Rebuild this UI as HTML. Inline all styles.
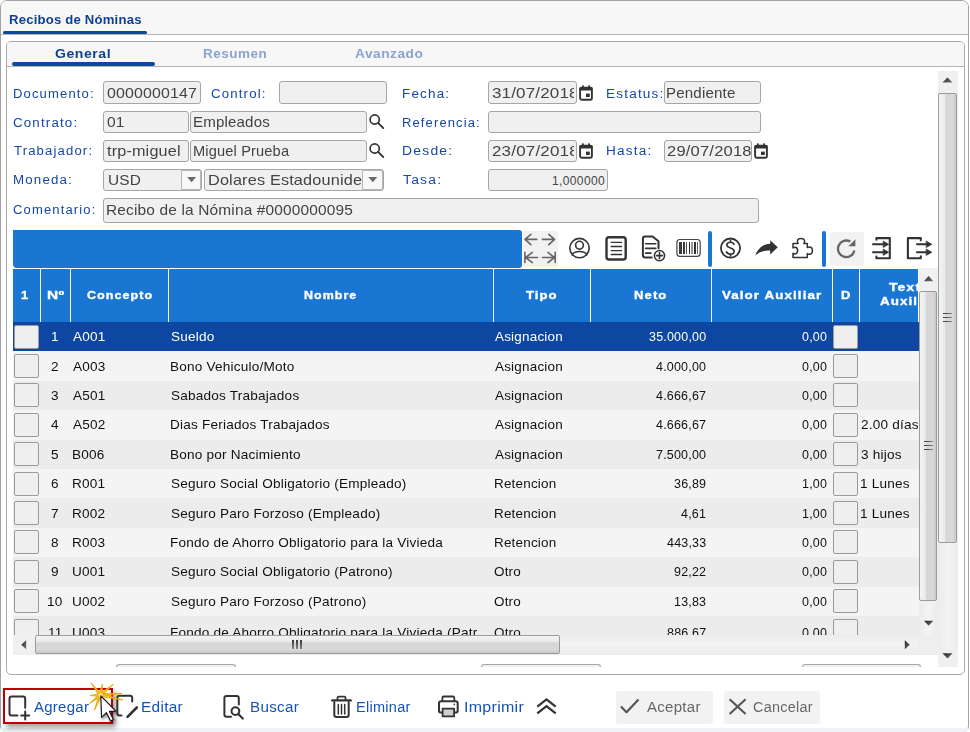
<!DOCTYPE html><html><head><meta charset="utf-8"><style>
html,body{margin:0;padding:0;background:#fff;width:970px;height:732px;overflow:hidden;position:relative;font-family:"Liberation Sans",sans-serif}
div{box-sizing:border-box}
svg{position:absolute;overflow:visible}
</style></head><body>
<div style="position:absolute;left:0px;top:0px;width:969px;height:733px;border:1px solid #a3a3a3;border-radius:7px;background:#fff"></div>
<div style="position:absolute;left:1px;top:1px;width:967px;height:33px;background:#f7f7f7;border-radius:6px 6px 0 0"></div>
<div style="position:absolute;left:1px;top:34px;width:967px;height:1px;background:#b4b4b4"></div>
<div style="position:absolute;left:9.09px;top:12.95px;font-size:13px;line-height:13px;height:13px;white-space:nowrap;color:#0f3f93;font-weight:bold;letter-spacing:0.200px;transform:scaleX(1.0092);transform-origin:0 0;">Recibos de Nóminas</div>
<div style="position:absolute;left:3px;top:31px;width:144px;height:3px;background:#0d47a1;border-radius:2px"></div>
<div style="position:absolute;left:1px;top:728px;width:967px;height:4px;background:#eef2f6;border-radius:0 0 6px 6px"></div>
<div style="position:absolute;left:6px;top:41px;width:959px;height:634px;border:1px solid #a9a9a9;border-radius:5px;background:#fff"></div>
<div style="position:absolute;left:7px;top:42px;width:957px;height:24px;background:#f7f7f7;border-radius:4px 4px 0 0"></div>
<div style="position:absolute;left:7px;top:66px;width:957px;height:1px;background:#b4b4b4"></div>
<div style="position:absolute;left:55.16px;top:46.95px;font-size:13px;line-height:13px;height:13px;white-space:nowrap;color:#0f3f93;font-weight:bold;letter-spacing:0.500px;transform:scaleX(1.0800);transform-origin:0 0;">General</div>
<div style="position:absolute;left:12px;top:62px;width:143px;height:4px;background:#0d47a1;border-radius:2px"></div>
<div style="position:absolute;left:203.37px;top:46.95px;font-size:13px;line-height:13px;height:13px;white-space:nowrap;color:#8ba3cf;font-weight:bold;letter-spacing:0.500px;transform:scaleX(1.0368);transform-origin:0 0;">Resumen</div>
<div style="position:absolute;left:354.68px;top:46.95px;font-size:13px;line-height:13px;height:13px;white-space:nowrap;color:#8ba3cf;font-weight:bold;letter-spacing:0.500px;transform:scaleX(1.0535);transform-origin:0 0;">Avanzado</div>
<div style="position:absolute;left:13.06px;top:87.67px;font-size:12.5px;line-height:12.5px;height:12.5px;white-space:nowrap;color:#1647a6;font-weight:normal;letter-spacing:1.100px;transform:scaleX(1.0426);transform-origin:0 0;">Documento:</div>
<div style="position:absolute;left:13.46px;top:116.58px;font-size:12.5px;line-height:12.5px;height:12.5px;white-space:nowrap;color:#1647a6;font-weight:normal;letter-spacing:1.100px;transform:scaleX(1.0650);transform-origin:0 0;">Contrato:</div>
<div style="position:absolute;left:13.79px;top:145.38px;font-size:12.5px;line-height:12.5px;height:12.5px;white-space:nowrap;color:#1647a6;font-weight:normal;letter-spacing:1.100px;transform:scaleX(1.0479);transform-origin:0 0;">Trabajador:</div>
<div style="position:absolute;left:13.04px;top:174.47px;font-size:12.5px;line-height:12.5px;height:12.5px;white-space:nowrap;color:#1647a6;font-weight:normal;letter-spacing:1.100px;transform:scaleX(1.0640);transform-origin:0 0;">Moneda:</div>
<div style="position:absolute;left:13.48px;top:204.38px;font-size:12.5px;line-height:12.5px;height:12.5px;white-space:nowrap;color:#1647a6;font-weight:normal;letter-spacing:1.100px;transform:scaleX(1.0401);transform-origin:0 0;">Comentario:</div>
<div style="position:absolute;left:210.66px;top:87.67px;font-size:12.5px;line-height:12.5px;height:12.5px;white-space:nowrap;color:#1647a6;font-weight:normal;letter-spacing:1.100px;transform:scaleX(1.0584);transform-origin:0 0;">Control:</div>
<div style="position:absolute;left:401.92px;top:87.67px;font-size:12.5px;line-height:12.5px;height:12.5px;white-space:nowrap;color:#1647a6;font-weight:normal;letter-spacing:1.100px;transform:scaleX(1.0769);transform-origin:0 0;">Fecha:</div>
<div style="position:absolute;left:401.96px;top:116.58px;font-size:12.5px;line-height:12.5px;height:12.5px;white-space:nowrap;color:#1647a6;font-weight:normal;letter-spacing:1.100px;transform:scaleX(1.0371);transform-origin:0 0;">Referencia:</div>
<div style="position:absolute;left:401.89px;top:145.38px;font-size:12.5px;line-height:12.5px;height:12.5px;white-space:nowrap;color:#1647a6;font-weight:normal;letter-spacing:1.100px;transform:scaleX(1.1116);transform-origin:0 0;">Desde:</div>
<div style="position:absolute;left:402.67px;top:174.47px;font-size:12.5px;line-height:12.5px;height:12.5px;white-space:nowrap;color:#1647a6;font-weight:normal;letter-spacing:1.100px;transform:scaleX(1.1098);transform-origin:0 0;">Tasa:</div>
<div style="position:absolute;left:605.92px;top:87.67px;font-size:12.5px;line-height:12.5px;height:12.5px;white-space:nowrap;color:#1647a6;font-weight:normal;letter-spacing:1.100px;transform:scaleX(1.0848);transform-origin:0 0;">Estatus:</div>
<div style="position:absolute;left:605.91px;top:145.38px;font-size:12.5px;line-height:12.5px;height:12.5px;white-space:nowrap;color:#1647a6;font-weight:normal;letter-spacing:1.100px;transform:scaleX(1.0886);transform-origin:0 0;">Hasta:</div>
<div style="position:absolute;left:103px;top:81px;width:98px;height:23px;background:#f0f0f0;border:1px solid #a6a6a6;border-radius:3px;overflow:hidden;"><div style="position:absolute;left:2.84px;top:4.08px;font-size:14.5px;line-height:14.5px;height:14.5px;white-space:nowrap;color:#444;font-weight:normal;letter-spacing:0.150px;transform:scaleX(1.0973);transform-origin:0 0;">0000000147</div></div>
<div style="position:absolute;left:279px;top:81px;width:108px;height:23px;background:#f0f0f0;border:1px solid #a6a6a6;border-radius:3px;overflow:hidden;"></div>
<div style="position:absolute;left:488px;top:81px;width:89px;height:23px;background:#f0f0f0;border:1px solid #a6a6a6;border-radius:3px;overflow:hidden;"><div style="position:absolute;left:0px;top:0px;width:84.5px;height:21px;overflow:hidden"><div style="position:absolute;left:2.80px;top:4.08px;font-size:14.5px;line-height:14.5px;height:14.5px;white-space:nowrap;color:#444;font-weight:normal;letter-spacing:0.150px;transform:scaleX(1.1700);transform-origin:0 0;">31/07/2018</div></div></div>
<div style="position:absolute;left:664px;top:81px;width:97px;height:23px;background:#f0f0f0;border:1px solid #a6a6a6;border-radius:3px;overflow:hidden;"><div style="position:absolute;left:0.85px;top:4.08px;font-size:14.5px;line-height:14.5px;height:14.5px;white-space:nowrap;color:#444;font-weight:normal;letter-spacing:0.150px;transform:scaleX(1.0417);transform-origin:0 0;">Pendiente</div></div>
<div style="position:absolute;left:103px;top:111px;width:86px;height:22px;background:#f0f0f0;border:1px solid #a6a6a6;border-radius:3px;overflow:hidden;"><div style="position:absolute;left:2.86px;top:2.88px;font-size:14.5px;line-height:14.5px;height:14.5px;white-space:nowrap;color:#444;font-weight:normal;letter-spacing:0.150px;transform:scaleX(1.0702);transform-origin:0 0;">01</div></div>
<div style="position:absolute;left:190px;top:111px;width:177px;height:22px;background:#f0f0f0;border:1px solid #a6a6a6;border-radius:3px;overflow:hidden;"><div style="position:absolute;left:2.45px;top:2.88px;font-size:14.5px;line-height:14.5px;height:14.5px;white-space:nowrap;color:#444;font-weight:normal;letter-spacing:0.150px;transform:scaleX(1.0403);transform-origin:0 0;">Empleados</div></div>
<div style="position:absolute;left:488px;top:111px;width:273px;height:22px;background:#f0f0f0;border:1px solid #a6a6a6;border-radius:3px;overflow:hidden;"></div>
<div style="position:absolute;left:103px;top:140px;width:86px;height:22px;background:#f0f0f0;border:1px solid #a6a6a6;border-radius:3px;overflow:hidden;"><div style="position:absolute;left:3.28px;top:2.68px;font-size:14.5px;line-height:14.5px;height:14.5px;white-space:nowrap;color:#444;font-weight:normal;letter-spacing:0.150px;transform:scaleX(1.1168);transform-origin:0 0;">trp-miguel</div></div>
<div style="position:absolute;left:190px;top:140px;width:177px;height:22px;background:#f0f0f0;border:1px solid #a6a6a6;border-radius:3px;overflow:hidden;"><div style="position:absolute;left:2.49px;top:2.68px;font-size:14.5px;line-height:14.5px;height:14.5px;white-space:nowrap;color:#444;font-weight:normal;letter-spacing:0.150px;transform:scaleX(1.0074);transform-origin:0 0;">Miguel Prueba</div></div>
<div style="position:absolute;left:488px;top:140px;width:89px;height:22px;background:#f0f0f0;border:1px solid #a6a6a6;border-radius:3px;overflow:hidden;"><div style="position:absolute;left:0px;top:0px;width:84.5px;height:20px;overflow:hidden"><div style="position:absolute;left:2.68px;top:2.68px;font-size:14.5px;line-height:14.5px;height:14.5px;white-space:nowrap;color:#444;font-weight:normal;letter-spacing:0.150px;transform:scaleX(1.1716);transform-origin:0 0;">23/07/2018</div></div></div>
<div style="position:absolute;left:664px;top:140px;width:88px;height:22px;background:#f0f0f0;border:1px solid #a6a6a6;border-radius:3px;overflow:hidden;"><div style="position:absolute;left:0px;top:0px;width:85.5px;height:20px;overflow:hidden"><div style="position:absolute;left:1.80px;top:2.68px;font-size:14.5px;line-height:14.5px;height:14.5px;white-space:nowrap;color:#444;font-weight:normal;letter-spacing:0.150px;transform:scaleX(1.1440);transform-origin:0 0;">29/07/2018</div></div></div>
<div style="position:absolute;left:103px;top:169px;width:99px;height:22px;background:#f0f0f0;border:1px solid #a6a6a6;border-radius:3px;overflow:hidden;"><div style="position:absolute;left:3.73px;top:2.88px;font-size:14.5px;line-height:14.5px;height:14.5px;white-space:nowrap;color:#444;font-weight:normal;letter-spacing:0.150px;transform:scaleX(1.0653);transform-origin:0 0;">USD</div></div>
<div style="position:absolute;left:204px;top:169px;width:180px;height:22px;background:#f0f0f0;border:1px solid #a6a6a6;border-radius:3px;overflow:hidden;"><div style="position:absolute;left:3.15px;top:2.88px;font-size:14.5px;line-height:14.5px;height:14.5px;white-space:nowrap;color:#444;font-weight:normal;letter-spacing:0.150px;transform:scaleX(1.1211);transform-origin:0 0;">Dolares Estadounidenses</div></div>
<div style="position:absolute;left:181px;top:170px;width:20px;height:20px;background:#f8f8f8;border:1px solid #b8b8b8;border-radius:0 2px 2px 0"></div>
<div style="position:absolute;left:362px;top:170px;width:21px;height:20px;background:#f8f8f8;border:1px solid #b8b8b8;border-radius:0 2px 2px 0"></div>
<div style="position:absolute;left:488px;top:169px;width:120px;height:22px;background:#f0f0f0;border:1px solid #a6a6a6;border-radius:3px;overflow:hidden;"><div style="position:absolute;left:62.90px;top:4.80px;font-size:12px;line-height:12px;height:12px;white-space:nowrap;color:#444;font-weight:normal;letter-spacing:0.400px;">1,000000</div></div>
<div style="position:absolute;left:103px;top:198px;width:656px;height:25px;background:#f0f0f0;border:1px solid #a6a6a6;border-radius:3px;overflow:hidden;"><div style="position:absolute;left:2.22px;top:3.68px;font-size:14.5px;line-height:14.5px;height:14.5px;white-space:nowrap;color:#444;font-weight:normal;letter-spacing:0.150px;transform:scaleX(1.0652);transform-origin:0 0;">Recibo de la Nómina #0000000095</div></div>
<svg style="left:0;top:0" width="970" height="732"><circle cx="374.7" cy="119.5" r="4.6" fill="none" stroke="#333" stroke-width="1.7"/><line x1="378.09999999999997" y1="122.9" x2="383.3" y2="128.1" stroke="#333" stroke-width="1.9" stroke-linecap="round"/></svg>
<svg style="left:0;top:0" width="970" height="732"><circle cx="374.7" cy="148.5" r="4.6" fill="none" stroke="#333" stroke-width="1.7"/><line x1="378.09999999999997" y1="151.9" x2="383.3" y2="157.1" stroke="#333" stroke-width="1.9" stroke-linecap="round"/></svg>
<svg style="left:579px;top:85px" width="14" height="16" viewBox="0 0 14 16"><rect x="1.1" y="2.6" width="11.8" height="12.2" rx="1.8" fill="none" stroke="#333" stroke-width="1.9"/><rect x="0.5" y="2" width="13" height="3.6" rx="1" fill="#333"/><rect x="3" y="0.2" width="1.8" height="3" rx="0.6" fill="#333"/><rect x="9.2" y="0.2" width="1.8" height="3" rx="0.6" fill="#333"/><rect x="7" y="8.6" width="3.8" height="3.4" fill="#333"/></svg>
<svg style="left:579px;top:143px" width="14" height="16" viewBox="0 0 14 16"><rect x="1.1" y="2.6" width="11.8" height="12.2" rx="1.8" fill="none" stroke="#333" stroke-width="1.9"/><rect x="0.5" y="2" width="13" height="3.6" rx="1" fill="#333"/><rect x="3" y="0.2" width="1.8" height="3" rx="0.6" fill="#333"/><rect x="9.2" y="0.2" width="1.8" height="3" rx="0.6" fill="#333"/><rect x="7" y="8.6" width="3.8" height="3.4" fill="#333"/></svg>
<svg style="left:754px;top:143px" width="14" height="16" viewBox="0 0 14 16"><rect x="1.1" y="2.6" width="11.8" height="12.2" rx="1.8" fill="none" stroke="#333" stroke-width="1.9"/><rect x="0.5" y="2" width="13" height="3.6" rx="1" fill="#333"/><rect x="3" y="0.2" width="1.8" height="3" rx="0.6" fill="#333"/><rect x="9.2" y="0.2" width="1.8" height="3" rx="0.6" fill="#333"/><rect x="7" y="8.6" width="3.8" height="3.4" fill="#333"/></svg>
<svg style="left:0;top:0" width="970" height="732"><path d="M187.1 177.1 L196.1 177.1 L191.6 182.29999999999998 Z" fill="#6a6a6a"/></svg>
<svg style="left:0;top:0" width="970" height="732"><path d="M368.3 177.1 L377.3 177.1 L372.8 182.29999999999998 Z" fill="#6a6a6a"/></svg>
<div style="position:absolute;left:13px;top:230px;width:509px;height:38px;background:#1976d2;border-radius:0 3px 3px 4px"></div>
<div style="position:absolute;left:13px;top:269px;width:905px;height:53px;background:#1976d2"></div>
<div style="position:absolute;left:40px;top:269px;width:1px;height:53px;background:#fff"></div>
<div style="position:absolute;left:70px;top:269px;width:1px;height:53px;background:#fff"></div>
<div style="position:absolute;left:168px;top:269px;width:1px;height:53px;background:#fff"></div>
<div style="position:absolute;left:493px;top:269px;width:1px;height:53px;background:#fff"></div>
<div style="position:absolute;left:590px;top:269px;width:1px;height:53px;background:#fff"></div>
<div style="position:absolute;left:711px;top:269px;width:1px;height:53px;background:#fff"></div>
<div style="position:absolute;left:832px;top:269px;width:1px;height:53px;background:#fff"></div>
<div style="position:absolute;left:859px;top:269px;width:1px;height:53px;background:#fff"></div>
<div style="position:absolute;left:21.38px;top:289.65px;font-size:11px;line-height:11px;height:11px;white-space:nowrap;color:#fff;font-weight:bold;letter-spacing:0.900px;transform:scaleX(1.1765);transform-origin:0 0;-webkit-text-stroke:0.35px #fff;">1</div>
<div style="position:absolute;left:46.62px;top:289.65px;font-size:11px;line-height:11px;height:11px;white-space:nowrap;color:#fff;font-weight:bold;letter-spacing:0.300px;transform:scaleX(1.4035);transform-origin:0 0;-webkit-text-stroke:0.35px #fff;">Nº</div>
<div style="position:absolute;left:86.89px;top:289.65px;font-size:11px;line-height:11px;height:11px;white-space:nowrap;color:#fff;font-weight:bold;letter-spacing:0.900px;transform:scaleX(1.1441);transform-origin:0 0;-webkit-text-stroke:0.35px #fff;">Concepto</div>
<div style="position:absolute;left:304.21px;top:289.65px;font-size:11px;line-height:11px;height:11px;white-space:nowrap;color:#fff;font-weight:bold;letter-spacing:0.900px;transform:scaleX(1.1333);transform-origin:0 0;-webkit-text-stroke:0.35px #fff;">Nombre</div>
<div style="position:absolute;left:526.38px;top:289.65px;font-size:11px;line-height:11px;height:11px;white-space:nowrap;color:#fff;font-weight:bold;letter-spacing:0.900px;transform:scaleX(1.1905);transform-origin:0 0;-webkit-text-stroke:0.35px #fff;">Tipo</div>
<div style="position:absolute;left:634.17px;top:289.65px;font-size:11px;line-height:11px;height:11px;white-space:nowrap;color:#fff;font-weight:bold;letter-spacing:0.900px;transform:scaleX(1.1923);transform-origin:0 0;-webkit-text-stroke:0.35px #fff;">Neto</div>
<div style="position:absolute;left:721.53px;top:289.65px;font-size:11px;line-height:11px;height:11px;white-space:nowrap;color:#fff;font-weight:bold;letter-spacing:0.900px;transform:scaleX(1.2154);transform-origin:0 0;-webkit-text-stroke:0.35px #fff;">Valor Auxiliar</div>
<div style="position:absolute;left:840.68px;top:289.65px;font-size:11px;line-height:11px;height:11px;white-space:nowrap;color:#fff;font-weight:bold;letter-spacing:0.900px;transform:scaleX(1.1765);transform-origin:0 0;-webkit-text-stroke:0.35px #fff;">D</div>
<div style="position:absolute;left:860px;top:269px;width:58px;height:53px;overflow:hidden"><div style="position:absolute;left:29.17px;top:13.25px;font-size:11px;line-height:11px;height:11px;white-space:nowrap;color:#fff;font-weight:bold;letter-spacing:0.900px;transform:scaleX(1.2658);transform-origin:0 0;-webkit-text-stroke:0.35px #fff;">Texto</div><div style="position:absolute;left:20.04px;top:27.35px;font-size:11px;line-height:11px;height:11px;white-space:nowrap;color:#fff;font-weight:bold;letter-spacing:0.900px;transform:scaleX(1.2121);transform-origin:0 0;-webkit-text-stroke:0.35px #fff;">Auxiliar</div></div>
<div style="position:absolute;left:13px;top:322px;width:906px;height:313px;overflow:hidden;background:#f4f4f4"><div style="position:absolute;left:0px;top:0.0px;width:906px;height:29.9px;background:#0d47a1"></div><div style="position:absolute;left:1px;top:2.6px;width:25px;height:24px;background:#efefef;border:1px solid #9a9a9a;border-radius:2px"></div><div style="position:absolute;left:820px;top:2.6px;width:25px;height:24px;background:#efefef;border:1px solid #9a9a9a;border-radius:2px"></div><div style="position:absolute;left:38.03px;top:8.25px;font-size:13px;line-height:13px;height:13px;white-space:nowrap;color:#fff;font-weight:normal;letter-spacing:0.200px;transform:scaleX(1.0450);transform-origin:0 0;">1</div><div style="position:absolute;left:60.30px;top:8.25px;font-size:13px;line-height:13px;height:13px;white-space:nowrap;color:#fff;font-weight:normal;letter-spacing:0.200px;transform:scaleX(1.0450);transform-origin:0 0;">A001</div><div style="position:absolute;left:155px;top:0.0px;width:310px;height:29.4px;overflow:hidden"><div style="position:absolute;left:2.77px;top:8.25px;font-size:13px;line-height:13px;height:13px;white-space:nowrap;color:#fff;font-weight:normal;letter-spacing:0.200px;transform:scaleX(1.0450);transform-origin:0 0;">Sueldo</div></div><div style="position:absolute;left:482.00px;top:8.25px;font-size:13px;line-height:13px;height:13px;white-space:nowrap;color:#fff;font-weight:normal;letter-spacing:0.200px;transform:scaleX(1.0350);transform-origin:0 0;">Asignacion</div><div style="position:absolute;left:635.82px;top:9.10px;font-size:12px;line-height:12px;height:12px;white-space:nowrap;color:#fff;font-weight:normal;letter-spacing:0.200px;transform:scaleX(1.0400);transform-origin:0 0;">35.000,00</div><div style="position:absolute;left:789.16px;top:9.10px;font-size:12px;line-height:12px;height:12px;white-space:nowrap;color:#fff;font-weight:normal;letter-spacing:0.200px;transform:scaleX(1.0400);transform-origin:0 0;">0,00</div><div style="position:absolute;left:0px;top:29.4px;width:906px;height:29.9px;background:#f4f4f4"></div><div style="position:absolute;left:1px;top:32.0px;width:25px;height:24px;background:#efefef;border:1px solid #9a9a9a;border-radius:2px"></div><div style="position:absolute;left:820px;top:32.0px;width:25px;height:24px;background:#efefef;border:1px solid #9a9a9a;border-radius:2px"></div><div style="position:absolute;left:38.24px;top:37.65px;font-size:13px;line-height:13px;height:13px;white-space:nowrap;color:#111;font-weight:normal;letter-spacing:0.200px;transform:scaleX(1.0450);transform-origin:0 0;">2</div><div style="position:absolute;left:60.30px;top:37.65px;font-size:13px;line-height:13px;height:13px;white-space:nowrap;color:#111;font-weight:normal;letter-spacing:0.200px;transform:scaleX(1.0450);transform-origin:0 0;">A003</div><div style="position:absolute;left:155px;top:29.4px;width:310px;height:29.4px;overflow:hidden"><div style="position:absolute;left:2.25px;top:8.25px;font-size:13px;line-height:13px;height:13px;white-space:nowrap;color:#111;font-weight:normal;letter-spacing:0.200px;transform:scaleX(1.0450);transform-origin:0 0;">Bono Vehiculo/Moto</div></div><div style="position:absolute;left:482.00px;top:37.65px;font-size:13px;line-height:13px;height:13px;white-space:nowrap;color:#111;font-weight:normal;letter-spacing:0.200px;transform:scaleX(1.0350);transform-origin:0 0;">Asignacion</div><div style="position:absolute;left:643.00px;top:38.50px;font-size:12px;line-height:12px;height:12px;white-space:nowrap;color:#111;font-weight:normal;letter-spacing:0.200px;transform:scaleX(1.0400);transform-origin:0 0;">4.000,00</div><div style="position:absolute;left:789.16px;top:38.50px;font-size:12px;line-height:12px;height:12px;white-space:nowrap;color:#111;font-weight:normal;letter-spacing:0.200px;transform:scaleX(1.0400);transform-origin:0 0;">0,00</div><div style="position:absolute;left:0px;top:58.8px;width:906px;height:29.9px;background:#ececec"></div><div style="position:absolute;left:1px;top:61.4px;width:25px;height:24px;background:#efefef;border:1px solid #9a9a9a;border-radius:2px"></div><div style="position:absolute;left:820px;top:61.4px;width:25px;height:24px;background:#efefef;border:1px solid #9a9a9a;border-radius:2px"></div><div style="position:absolute;left:38.24px;top:67.05px;font-size:13px;line-height:13px;height:13px;white-space:nowrap;color:#111;font-weight:normal;letter-spacing:0.200px;transform:scaleX(1.0450);transform-origin:0 0;">3</div><div style="position:absolute;left:60.30px;top:67.05px;font-size:13px;line-height:13px;height:13px;white-space:nowrap;color:#111;font-weight:normal;letter-spacing:0.200px;transform:scaleX(1.0450);transform-origin:0 0;">A501</div><div style="position:absolute;left:155px;top:58.8px;width:310px;height:29.4px;overflow:hidden"><div style="position:absolute;left:2.77px;top:8.25px;font-size:13px;line-height:13px;height:13px;white-space:nowrap;color:#111;font-weight:normal;letter-spacing:0.200px;transform:scaleX(1.0450);transform-origin:0 0;">Sabados Trabajados</div></div><div style="position:absolute;left:482.00px;top:67.05px;font-size:13px;line-height:13px;height:13px;white-space:nowrap;color:#111;font-weight:normal;letter-spacing:0.200px;transform:scaleX(1.0350);transform-origin:0 0;">Asignacion</div><div style="position:absolute;left:643.10px;top:67.90px;font-size:12px;line-height:12px;height:12px;white-space:nowrap;color:#111;font-weight:normal;letter-spacing:0.200px;transform:scaleX(1.0400);transform-origin:0 0;">4.666,67</div><div style="position:absolute;left:789.16px;top:67.90px;font-size:12px;line-height:12px;height:12px;white-space:nowrap;color:#111;font-weight:normal;letter-spacing:0.200px;transform:scaleX(1.0400);transform-origin:0 0;">0,00</div><div style="position:absolute;left:0px;top:88.2px;width:906px;height:29.9px;background:#f4f4f4"></div><div style="position:absolute;left:1px;top:90.8px;width:25px;height:24px;background:#efefef;border:1px solid #9a9a9a;border-radius:2px"></div><div style="position:absolute;left:820px;top:90.8px;width:25px;height:24px;background:#efefef;border:1px solid #9a9a9a;border-radius:2px"></div><div style="position:absolute;left:38.24px;top:96.45px;font-size:13px;line-height:13px;height:13px;white-space:nowrap;color:#111;font-weight:normal;letter-spacing:0.200px;transform:scaleX(1.0450);transform-origin:0 0;">4</div><div style="position:absolute;left:60.30px;top:96.45px;font-size:13px;line-height:13px;height:13px;white-space:nowrap;color:#111;font-weight:normal;letter-spacing:0.200px;transform:scaleX(1.0450);transform-origin:0 0;">A502</div><div style="position:absolute;left:155px;top:88.2px;width:310px;height:29.4px;overflow:hidden"><div style="position:absolute;left:2.25px;top:8.25px;font-size:13px;line-height:13px;height:13px;white-space:nowrap;color:#111;font-weight:normal;letter-spacing:0.200px;transform:scaleX(1.0450);transform-origin:0 0;">Dias Feriados Trabajados</div></div><div style="position:absolute;left:482.00px;top:96.45px;font-size:13px;line-height:13px;height:13px;white-space:nowrap;color:#111;font-weight:normal;letter-spacing:0.200px;transform:scaleX(1.0350);transform-origin:0 0;">Asignacion</div><div style="position:absolute;left:643.10px;top:97.30px;font-size:12px;line-height:12px;height:12px;white-space:nowrap;color:#111;font-weight:normal;letter-spacing:0.200px;transform:scaleX(1.0400);transform-origin:0 0;">4.666,67</div><div style="position:absolute;left:789.16px;top:97.30px;font-size:12px;line-height:12px;height:12px;white-space:nowrap;color:#111;font-weight:normal;letter-spacing:0.200px;transform:scaleX(1.0400);transform-origin:0 0;">0,00</div><div style="position:absolute;left:847.87px;top:96.45px;font-size:13px;line-height:13px;height:13px;white-space:nowrap;color:#111;font-weight:normal;letter-spacing:0.200px;transform:scaleX(1.0450);transform-origin:0 0;">2.00 días</div><div style="position:absolute;left:0px;top:117.6px;width:906px;height:29.9px;background:#ececec"></div><div style="position:absolute;left:1px;top:120.2px;width:25px;height:24px;background:#efefef;border:1px solid #9a9a9a;border-radius:2px"></div><div style="position:absolute;left:820px;top:120.2px;width:25px;height:24px;background:#efefef;border:1px solid #9a9a9a;border-radius:2px"></div><div style="position:absolute;left:38.24px;top:125.85px;font-size:13px;line-height:13px;height:13px;white-space:nowrap;color:#111;font-weight:normal;letter-spacing:0.200px;transform:scaleX(1.0450);transform-origin:0 0;">5</div><div style="position:absolute;left:59.15px;top:125.85px;font-size:13px;line-height:13px;height:13px;white-space:nowrap;color:#111;font-weight:normal;letter-spacing:0.200px;transform:scaleX(1.0450);transform-origin:0 0;">B006</div><div style="position:absolute;left:155px;top:117.6px;width:310px;height:29.4px;overflow:hidden"><div style="position:absolute;left:2.25px;top:8.25px;font-size:13px;line-height:13px;height:13px;white-space:nowrap;color:#111;font-weight:normal;letter-spacing:0.200px;transform:scaleX(1.0450);transform-origin:0 0;">Bono por Nacimiento</div></div><div style="position:absolute;left:482.00px;top:125.85px;font-size:13px;line-height:13px;height:13px;white-space:nowrap;color:#111;font-weight:normal;letter-spacing:0.200px;transform:scaleX(1.0350);transform-origin:0 0;">Asignacion</div><div style="position:absolute;left:643.00px;top:126.70px;font-size:12px;line-height:12px;height:12px;white-space:nowrap;color:#111;font-weight:normal;letter-spacing:0.200px;transform:scaleX(1.0400);transform-origin:0 0;">7.500,00</div><div style="position:absolute;left:789.16px;top:126.70px;font-size:12px;line-height:12px;height:12px;white-space:nowrap;color:#111;font-weight:normal;letter-spacing:0.200px;transform:scaleX(1.0400);transform-origin:0 0;">0,00</div><div style="position:absolute;left:847.98px;top:125.85px;font-size:13px;line-height:13px;height:13px;white-space:nowrap;color:#111;font-weight:normal;letter-spacing:0.200px;transform:scaleX(1.0450);transform-origin:0 0;">3 hijos</div><div style="position:absolute;left:0px;top:147.0px;width:906px;height:29.9px;background:#f4f4f4"></div><div style="position:absolute;left:1px;top:149.6px;width:25px;height:24px;background:#efefef;border:1px solid #9a9a9a;border-radius:2px"></div><div style="position:absolute;left:820px;top:149.6px;width:25px;height:24px;background:#efefef;border:1px solid #9a9a9a;border-radius:2px"></div><div style="position:absolute;left:38.13px;top:155.25px;font-size:13px;line-height:13px;height:13px;white-space:nowrap;color:#111;font-weight:normal;letter-spacing:0.200px;transform:scaleX(1.0450);transform-origin:0 0;">6</div><div style="position:absolute;left:59.15px;top:155.25px;font-size:13px;line-height:13px;height:13px;white-space:nowrap;color:#111;font-weight:normal;letter-spacing:0.200px;transform:scaleX(1.0450);transform-origin:0 0;">R001</div><div style="position:absolute;left:155px;top:147.0px;width:310px;height:29.4px;overflow:hidden"><div style="position:absolute;left:2.77px;top:8.25px;font-size:13px;line-height:13px;height:13px;white-space:nowrap;color:#111;font-weight:normal;letter-spacing:0.200px;transform:scaleX(1.0450);transform-origin:0 0;">Seguro Social Obligatorio (Empleado)</div></div><div style="position:absolute;left:480.86px;top:155.25px;font-size:13px;line-height:13px;height:13px;white-space:nowrap;color:#111;font-weight:normal;letter-spacing:0.200px;transform:scaleX(1.0350);transform-origin:0 0;">Retencion</div><div style="position:absolute;left:660.99px;top:156.10px;font-size:12px;line-height:12px;height:12px;white-space:nowrap;color:#111;font-weight:normal;letter-spacing:0.200px;transform:scaleX(1.0400);transform-origin:0 0;">36,89</div><div style="position:absolute;left:789.16px;top:156.10px;font-size:12px;line-height:12px;height:12px;white-space:nowrap;color:#111;font-weight:normal;letter-spacing:0.200px;transform:scaleX(1.0400);transform-origin:0 0;">1,00</div><div style="position:absolute;left:847.46px;top:155.25px;font-size:13px;line-height:13px;height:13px;white-space:nowrap;color:#111;font-weight:normal;letter-spacing:0.200px;transform:scaleX(1.0450);transform-origin:0 0;">1 Lunes</div><div style="position:absolute;left:0px;top:176.4px;width:906px;height:29.9px;background:#ececec"></div><div style="position:absolute;left:1px;top:179.0px;width:25px;height:24px;background:#efefef;border:1px solid #9a9a9a;border-radius:2px"></div><div style="position:absolute;left:820px;top:179.0px;width:25px;height:24px;background:#efefef;border:1px solid #9a9a9a;border-radius:2px"></div><div style="position:absolute;left:38.19px;top:184.65px;font-size:13px;line-height:13px;height:13px;white-space:nowrap;color:#111;font-weight:normal;letter-spacing:0.200px;transform:scaleX(1.0450);transform-origin:0 0;">7</div><div style="position:absolute;left:59.15px;top:184.65px;font-size:13px;line-height:13px;height:13px;white-space:nowrap;color:#111;font-weight:normal;letter-spacing:0.200px;transform:scaleX(1.0450);transform-origin:0 0;">R002</div><div style="position:absolute;left:155px;top:176.4px;width:310px;height:29.4px;overflow:hidden"><div style="position:absolute;left:2.77px;top:8.25px;font-size:13px;line-height:13px;height:13px;white-space:nowrap;color:#111;font-weight:normal;letter-spacing:0.200px;transform:scaleX(1.0450);transform-origin:0 0;">Seguro Paro Forzoso (Empleado)</div></div><div style="position:absolute;left:480.86px;top:184.65px;font-size:13px;line-height:13px;height:13px;white-space:nowrap;color:#111;font-weight:normal;letter-spacing:0.200px;transform:scaleX(1.0350);transform-origin:0 0;">Retencion</div><div style="position:absolute;left:668.16px;top:185.50px;font-size:12px;line-height:12px;height:12px;white-space:nowrap;color:#111;font-weight:normal;letter-spacing:0.200px;transform:scaleX(1.0400);transform-origin:0 0;">4,61</div><div style="position:absolute;left:789.16px;top:185.50px;font-size:12px;line-height:12px;height:12px;white-space:nowrap;color:#111;font-weight:normal;letter-spacing:0.200px;transform:scaleX(1.0400);transform-origin:0 0;">1,00</div><div style="position:absolute;left:847.46px;top:184.65px;font-size:13px;line-height:13px;height:13px;white-space:nowrap;color:#111;font-weight:normal;letter-spacing:0.200px;transform:scaleX(1.0450);transform-origin:0 0;">1 Lunes</div><div style="position:absolute;left:0px;top:205.8px;width:906px;height:29.9px;background:#f4f4f4"></div><div style="position:absolute;left:1px;top:208.4px;width:25px;height:24px;background:#efefef;border:1px solid #9a9a9a;border-radius:2px"></div><div style="position:absolute;left:820px;top:208.4px;width:25px;height:24px;background:#efefef;border:1px solid #9a9a9a;border-radius:2px"></div><div style="position:absolute;left:38.19px;top:214.05px;font-size:13px;line-height:13px;height:13px;white-space:nowrap;color:#111;font-weight:normal;letter-spacing:0.200px;transform:scaleX(1.0450);transform-origin:0 0;">8</div><div style="position:absolute;left:59.15px;top:214.05px;font-size:13px;line-height:13px;height:13px;white-space:nowrap;color:#111;font-weight:normal;letter-spacing:0.200px;transform:scaleX(1.0450);transform-origin:0 0;">R003</div><div style="position:absolute;left:155px;top:205.8px;width:310px;height:29.4px;overflow:hidden"><div style="position:absolute;left:2.25px;top:8.25px;font-size:13px;line-height:13px;height:13px;white-space:nowrap;color:#111;font-weight:normal;letter-spacing:0.200px;transform:scaleX(1.0450);transform-origin:0 0;">Fondo de Ahorro Obligatorio para la Vivieda</div></div><div style="position:absolute;left:480.86px;top:214.05px;font-size:13px;line-height:13px;height:13px;white-space:nowrap;color:#111;font-weight:normal;letter-spacing:0.200px;transform:scaleX(1.0350);transform-origin:0 0;">Retencion</div><div style="position:absolute;left:653.81px;top:214.90px;font-size:12px;line-height:12px;height:12px;white-space:nowrap;color:#111;font-weight:normal;letter-spacing:0.200px;transform:scaleX(1.0400);transform-origin:0 0;">443,33</div><div style="position:absolute;left:789.16px;top:214.90px;font-size:12px;line-height:12px;height:12px;white-space:nowrap;color:#111;font-weight:normal;letter-spacing:0.200px;transform:scaleX(1.0400);transform-origin:0 0;">0,00</div><div style="position:absolute;left:0px;top:235.2px;width:906px;height:29.9px;background:#ececec"></div><div style="position:absolute;left:1px;top:237.8px;width:25px;height:24px;background:#efefef;border:1px solid #9a9a9a;border-radius:2px"></div><div style="position:absolute;left:820px;top:237.8px;width:25px;height:24px;background:#efefef;border:1px solid #9a9a9a;border-radius:2px"></div><div style="position:absolute;left:38.24px;top:243.45px;font-size:13px;line-height:13px;height:13px;white-space:nowrap;color:#111;font-weight:normal;letter-spacing:0.200px;transform:scaleX(1.0450);transform-origin:0 0;">9</div><div style="position:absolute;left:59.25px;top:243.45px;font-size:13px;line-height:13px;height:13px;white-space:nowrap;color:#111;font-weight:normal;letter-spacing:0.200px;transform:scaleX(1.0450);transform-origin:0 0;">U001</div><div style="position:absolute;left:155px;top:235.2px;width:310px;height:29.4px;overflow:hidden"><div style="position:absolute;left:2.77px;top:8.25px;font-size:13px;line-height:13px;height:13px;white-space:nowrap;color:#111;font-weight:normal;letter-spacing:0.200px;transform:scaleX(1.0450);transform-origin:0 0;">Seguro Social Obligatorio (Patrono)</div></div><div style="position:absolute;left:481.38px;top:243.45px;font-size:13px;line-height:13px;height:13px;white-space:nowrap;color:#111;font-weight:normal;letter-spacing:0.200px;transform:scaleX(1.0350);transform-origin:0 0;">Otro</div><div style="position:absolute;left:661.09px;top:244.30px;font-size:12px;line-height:12px;height:12px;white-space:nowrap;color:#111;font-weight:normal;letter-spacing:0.200px;transform:scaleX(1.0400);transform-origin:0 0;">92,22</div><div style="position:absolute;left:789.16px;top:244.30px;font-size:12px;line-height:12px;height:12px;white-space:nowrap;color:#111;font-weight:normal;letter-spacing:0.200px;transform:scaleX(1.0400);transform-origin:0 0;">0,00</div><div style="position:absolute;left:0px;top:264.6px;width:906px;height:29.9px;background:#f4f4f4"></div><div style="position:absolute;left:1px;top:267.2px;width:25px;height:24px;background:#efefef;border:1px solid #9a9a9a;border-radius:2px"></div><div style="position:absolute;left:820px;top:267.2px;width:25px;height:24px;background:#efefef;border:1px solid #9a9a9a;border-radius:2px"></div><div style="position:absolute;left:34.06px;top:272.85px;font-size:13px;line-height:13px;height:13px;white-space:nowrap;color:#111;font-weight:normal;letter-spacing:0.200px;transform:scaleX(1.0450);transform-origin:0 0;">10</div><div style="position:absolute;left:59.25px;top:272.85px;font-size:13px;line-height:13px;height:13px;white-space:nowrap;color:#111;font-weight:normal;letter-spacing:0.200px;transform:scaleX(1.0450);transform-origin:0 0;">U002</div><div style="position:absolute;left:155px;top:264.6px;width:310px;height:29.4px;overflow:hidden"><div style="position:absolute;left:2.77px;top:8.25px;font-size:13px;line-height:13px;height:13px;white-space:nowrap;color:#111;font-weight:normal;letter-spacing:0.200px;transform:scaleX(1.0450);transform-origin:0 0;">Seguro Paro Forzoso (Patrono)</div></div><div style="position:absolute;left:481.38px;top:272.85px;font-size:13px;line-height:13px;height:13px;white-space:nowrap;color:#111;font-weight:normal;letter-spacing:0.200px;transform:scaleX(1.0350);transform-origin:0 0;">Otro</div><div style="position:absolute;left:660.99px;top:273.70px;font-size:12px;line-height:12px;height:12px;white-space:nowrap;color:#111;font-weight:normal;letter-spacing:0.200px;transform:scaleX(1.0400);transform-origin:0 0;">13,83</div><div style="position:absolute;left:789.16px;top:273.70px;font-size:12px;line-height:12px;height:12px;white-space:nowrap;color:#111;font-weight:normal;letter-spacing:0.200px;transform:scaleX(1.0400);transform-origin:0 0;">0,00</div><div style="position:absolute;left:0px;top:294.0px;width:906px;height:29.9px;background:#ececec"></div><div style="position:absolute;left:1px;top:296.6px;width:25px;height:24px;background:#efefef;border:1px solid #9a9a9a;border-radius:2px"></div><div style="position:absolute;left:820px;top:296.6px;width:25px;height:24px;background:#efefef;border:1px solid #9a9a9a;border-radius:2px"></div><div style="position:absolute;left:34.63px;top:303.75px;font-size:13px;line-height:13px;height:13px;white-space:nowrap;color:#111;font-weight:normal;letter-spacing:0.200px;transform:scaleX(1.0450);transform-origin:0 0;">11</div><div style="position:absolute;left:59.25px;top:303.75px;font-size:13px;line-height:13px;height:13px;white-space:nowrap;color:#111;font-weight:normal;letter-spacing:0.200px;transform:scaleX(1.0450);transform-origin:0 0;">U003</div><div style="position:absolute;left:155px;top:294.0px;width:310px;height:29.4px;overflow:hidden"><div style="position:absolute;left:2.25px;top:9.75px;font-size:13px;line-height:13px;height:13px;white-space:nowrap;color:#111;font-weight:normal;letter-spacing:0.200px;transform:scaleX(1.0450);transform-origin:0 0;">Fondo de Ahorro Obligatorio para la Vivieda (Patrono)</div></div><div style="position:absolute;left:481.38px;top:303.75px;font-size:13px;line-height:13px;height:13px;white-space:nowrap;color:#111;font-weight:normal;letter-spacing:0.200px;transform:scaleX(1.0350);transform-origin:0 0;">Otro</div><div style="position:absolute;left:653.92px;top:304.60px;font-size:12px;line-height:12px;height:12px;white-space:nowrap;color:#111;font-weight:normal;letter-spacing:0.200px;transform:scaleX(1.0400);transform-origin:0 0;">886,67</div><div style="position:absolute;left:789.16px;top:304.60px;font-size:12px;line-height:12px;height:12px;white-space:nowrap;color:#111;font-weight:normal;letter-spacing:0.200px;transform:scaleX(1.0400);transform-origin:0 0;">0,00</div></div>
<div style="position:absolute;left:523px;top:231px;width:35px;height:35.5px;background:#f2f2f2;border-radius:2px"></div>
<div style="position:absolute;left:830px;top:231.8px;width:34px;height:34px;background:#f2f2f2;border-radius:3px"></div>
<svg style="left:0;top:0" width="970" height="732" fill="none" stroke-linecap="round" stroke-linejoin="round"><g stroke="#666" stroke-width="1.6"><path d="M536.8 239.4 H525 M530.9 234.3 L525 239.4 L530.9 244.7"/><path d="M542.4 239.4 H554.6 M548.8 234.3 L554.6 239.4 L548.8 244.7"/><path d="M524.9 252.3 V262.6 M537.6 257.5 H525.6 M532.3 252.4 L525.6 257.5 L532.3 262.6"/><path d="M555.2 252.3 V262.6 M542.4 257.5 H554.4 M548 252.4 L554.4 257.5 L548 262.6"/></g><g stroke="#333" stroke-width="1.6"><circle cx="579.5" cy="248.1" r="9.7"/><circle cx="579.5" cy="245.2" r="3.9"/><path d="M572.2 254.8 C574.5 250.4 584.5 250.4 586.8 254.8"/></g><rect x="606.5" y="237.3" width="19.2" height="22.2" rx="2.6" stroke="#333" stroke-width="2.4"/><path d="M611.2 242.4 H621.6 M611.2 246.5 H621.6 M611.2 250.6 H621.6 M611.2 254.5 H621.6" stroke="#333" stroke-width="1.3"/><path d="M651.8 257.4 H645 Q642.9 257.4 642.9 255.3 V238.6 Q642.9 236.5 645 236.5 H652.6 L658.5 241.2 V248.2" stroke="#333" stroke-width="2"/><path d="M645.6 243.7 H655.8 M645.6 248.4 H655.8 M645.6 253.1 H651" stroke="#333" stroke-width="1.6"/><circle cx="659.5" cy="255.6" r="5.1" stroke="#333" stroke-width="1.5"/><path d="M659.5 252.6 V258.6 M656.5 255.6 H662.5" stroke="#333" stroke-width="1.6"/><rect x="676.9" y="239.5" width="23.3" height="16.8" rx="3" stroke="#444" stroke-width="1.2"/></svg>
<div style="position:absolute;left:679.3px;top:242px;width:2.5px;height:11.8px;background:#3a3a3a"></div>
<div style="position:absolute;left:683.3px;top:242px;width:1.8px;height:11.8px;background:#3a3a3a"></div>
<div style="position:absolute;left:685.8px;top:242px;width:0.9px;height:11.8px;background:#555"></div>
<div style="position:absolute;left:688.6px;top:242px;width:1.9px;height:11.8px;background:#333"></div>
<div style="position:absolute;left:691.2px;top:242px;width:1.4px;height:11.8px;background:#999"></div>
<div style="position:absolute;left:694.1px;top:242px;width:1.8px;height:11.8px;background:#333"></div>
<div style="position:absolute;left:697.0px;top:242px;width:0.8px;height:11.8px;background:#666"></div>
<div style="position:absolute;left:707.5px;top:231px;width:4.6px;height:36px;background:#1976d2;border-radius:2.3px"></div>
<div style="position:absolute;left:821.6px;top:231px;width:4.8px;height:36px;background:#1976d2;border-radius:2.4px"></div>
<svg style="left:0;top:0" width="970" height="732" fill="none" stroke-linecap="round" stroke-linejoin="round"><circle cx="730.5" cy="248.1" r="9.6" stroke="#333" stroke-width="1.8"/><path d="M734 244.3 C733.5 242.8 732.1 242.2 730.4 242.2 C728.3 242.2 726.9 243.3 726.9 244.9 C726.9 246.7 728.6 247.3 730.5 247.9 C732.6 248.6 734.2 249.3 734.2 251.3 C734.2 253.1 732.6 254.1 730.5 254.1 C728.4 254.1 727.1 253.3 726.5 251.9 M730.5 240.3 V242.2 M730.5 254.1 V256" stroke="#333" stroke-width="1.6"/><path d="M755.2 255.6 C757.5 249 762 244.2 770.2 243.7 V240.3 L777.8 247.3 L770.2 254.5 V250.6 C764 250.4 759.5 251.8 755.2 255.6 Z" fill="#333"/><path d="M793 243.5 H798.2 C797.6 242.8 797.4 242.2 797.4 241.4 C797.4 239.6 799 238.4 801 238.4 C803 238.4 804.6 239.6 804.6 241.4 C804.6 242.2 804.4 242.8 803.8 243.5 H807.3 V247.6 C808 247.1 808.7 246.9 809.5 246.9 C811.3 246.9 812.4 248.6 812.4 250.6 C812.4 252.6 811.3 254.3 809.5 254.3 C808.7 254.3 808 254.1 807.3 253.6 V257.6 H793 V253.3 C793.6 253.7 794.2 253.9 795 253.9 C796.7 253.9 797.6 252.4 797.6 250.6 C797.6 248.8 796.7 247.3 795 247.3 C794.2 247.3 793.6 247.5 793 247.9 Z" stroke="#333" stroke-width="1.5"/><path d="M854.4 250.6 A8.3 8.3 0 1 1 850.4 241.6" stroke="#666" stroke-width="2.3" stroke-linecap="butt"/><path d="M855.4 239.2 V246.2 H848.4 Z" fill="#666"/><path d="M876.4 239.8 V238.1 H889.8 V258.2 H876.4 V256.5" stroke="#333" stroke-width="2.1"/><path d="M873 244.3 H884.5 M873 252.2 H884.5" stroke="#333" stroke-width="2"/><path d="M883.5 241.3 L888.6 244.3 L883.5 247.3 Z M883.5 249.2 L888.6 252.2 L883.5 255.2 Z" fill="#333" stroke="#333" stroke-width="0.8"/><path d="M920.8 240.3 V238.1 H907.9 V258.2 H920.8 V256.2" stroke="#333" stroke-width="2.1"/><path d="M917 244.3 H927.5 M917 252.2 H927.5" stroke="#333" stroke-width="2"/><path d="M926.5 241.3 L931.8 244.3 L926.5 247.3 Z M926.5 249.2 L931.8 252.2 L926.5 255.2 Z" fill="#333" stroke="#333" stroke-width="0.8"/></svg>
<div style="position:absolute;left:938px;top:71px;width:20px;height:596px;background:linear-gradient(to right,#ececec,#f3f3f3 50%,#ececec)"></div>
<div style="position:absolute;left:938px;top:71px;width:20px;height:22px;background:#f0f0f0"></div>
<svg style="left:0;top:0" width="970" height="732"><defs><linearGradient id="tg" x1="0" y1="0" x2="1" y2="1"><stop offset="0" stop-color="#222"/><stop offset="1" stop-color="#777"/></linearGradient></defs><path d="M942.5 82.5 L952.5 82.5 L947.5 77.5 Z" fill="url(#tg)"/></svg>
<div style="position:absolute;left:938.3px;top:93px;width:18.8px;height:450px;border:1px solid #9c9c9c;border-radius:2px;background:linear-gradient(to right,#f4f4f4 0%,#e9e9e9 35%,#d6d6d6 40%,#d9d9d9 80%,#c9c9c9 100%)"></div>
<div style="position:absolute;left:943.3px;top:313px;width:9px;height:1.4px;background:linear-gradient(to right,#333,#888)"></div>
<div style="position:absolute;left:943.3px;top:317px;width:9px;height:1.4px;background:linear-gradient(to right,#333,#888)"></div>
<div style="position:absolute;left:943.3px;top:321px;width:9px;height:1.4px;background:linear-gradient(to right,#333,#888)"></div>
<div style="position:absolute;left:938px;top:650px;width:20px;height:17px;background:#f0f0f0"></div>
<svg style="left:0;top:0" width="970" height="732"><defs><linearGradient id="tg" x1="0" y1="0" x2="1" y2="1"><stop offset="0" stop-color="#222"/><stop offset="1" stop-color="#777"/></linearGradient></defs><path d="M942.5 653.3 L952.5 653.3 L947.5 658.5 Z" fill="url(#tg)"/></svg>
<div style="position:absolute;left:919px;top:268px;width:19px;height:367px;background:linear-gradient(to right,#ececec,#f3f3f3 50%,#ececec)"></div>
<div style="position:absolute;left:919px;top:268px;width:19px;height:22.5px;background:#f0f0f0"></div>
<svg style="left:0;top:0" width="970" height="732"><defs><linearGradient id="tg" x1="0" y1="0" x2="1" y2="1"><stop offset="0" stop-color="#222"/><stop offset="1" stop-color="#777"/></linearGradient></defs><path d="M924 281.2 L933.3 281.2 L928.6 276 Z" fill="url(#tg)"/></svg>
<div style="position:absolute;left:919.2px;top:290.5px;width:18px;height:310px;border:1px solid #9c9c9c;border-radius:2px;background:linear-gradient(to right,#f4f4f4 0%,#e9e9e9 35%,#d6d6d6 40%,#d9d9d9 80%,#c9c9c9 100%)"></div>
<div style="position:absolute;left:923.5px;top:441px;width:9px;height:1.4px;background:linear-gradient(to right,#333,#888)"></div>
<div style="position:absolute;left:923.5px;top:445px;width:9px;height:1.4px;background:linear-gradient(to right,#333,#888)"></div>
<div style="position:absolute;left:923.5px;top:449px;width:9px;height:1.4px;background:linear-gradient(to right,#333,#888)"></div>
<svg style="left:0;top:0" width="970" height="732"><defs><linearGradient id="tg" x1="0" y1="0" x2="1" y2="1"><stop offset="0" stop-color="#222"/><stop offset="1" stop-color="#777"/></linearGradient></defs><path d="M924 620.8 L933.3 620.8 L928.6 625.8 Z" fill="url(#tg)"/></svg>
<div style="position:absolute;left:13px;top:635px;width:906px;height:19.5px;background:linear-gradient(to bottom,#ececec,#f3f3f3 50%,#ececec)"></div>
<div style="position:absolute;left:13px;top:635px;width:21.5px;height:19.5px;background:#f0f0f0"></div>
<svg style="left:0;top:0" width="970" height="732"><defs><linearGradient id="tg" x1="0" y1="0" x2="1" y2="1"><stop offset="0" stop-color="#222"/><stop offset="1" stop-color="#777"/></linearGradient></defs><path d="M26.2 640.3 L26.2 649.3 L21.2 644.8 Z" fill="url(#tg)"/></svg>
<div style="position:absolute;left:35px;top:635px;width:524.5px;height:19px;border:1px solid #9c9c9c;border-radius:2px;background:linear-gradient(to bottom,#f4f4f4 0%,#e9e9e9 35%,#d6d6d6 40%,#d9d9d9 80%,#c9c9c9 100%)"></div>
<div style="position:absolute;left:292.2px;top:640px;width:1.4px;height:9px;background:linear-gradient(#333,#888)"></div>
<div style="position:absolute;left:296.2px;top:640px;width:1.4px;height:9px;background:linear-gradient(#333,#888)"></div>
<div style="position:absolute;left:300.2px;top:640px;width:1.4px;height:9px;background:linear-gradient(#333,#888)"></div>
<svg style="left:0;top:0" width="970" height="732"><defs><linearGradient id="tg" x1="0" y1="0" x2="1" y2="1"><stop offset="0" stop-color="#222"/><stop offset="1" stop-color="#777"/></linearGradient></defs><path d="M904.8 640.3 L904.8 649.3 L909.8 644.8 Z" fill="url(#tg)"/></svg>
<div style="position:absolute;left:917.5px;top:635px;width:20.5px;height:19.5px;background:#eeeeee"></div>
<div style="position:absolute;left:116px;top:663.8px;width:119.5px;height:3.5px;border:1px solid #a6a6a6;border-bottom:none;border-radius:3px 3px 0 0;background:#f0f0f0"></div>
<div style="position:absolute;left:481px;top:663.8px;width:119.5px;height:3.5px;border:1px solid #a6a6a6;border-bottom:none;border-radius:3px 3px 0 0;background:#f0f0f0"></div>
<div style="position:absolute;left:801.5px;top:663.8px;width:119.5px;height:3.5px;border:1px solid #a6a6a6;border-bottom:none;border-radius:3px 3px 0 0;background:#f0f0f0"></div>
<div style="position:absolute;left:3px;top:688px;width:110px;height:36px;border:2px solid #c00000;box-shadow:3px 4px 5px rgba(0,0,0,0.35)"></div>
<div style="position:absolute;left:34.30px;top:700.10px;font-size:14px;line-height:14px;height:14px;white-space:nowrap;color:#1553b8;font-weight:normal;letter-spacing:0.250px;transform:scaleX(1.0705);transform-origin:0 0;">Agregar</div>
<div style="position:absolute;left:141.39px;top:700.10px;font-size:14px;line-height:14px;height:14px;white-space:nowrap;color:#1553b8;font-weight:normal;letter-spacing:0.250px;transform:scaleX(1.1029);transform-origin:0 0;">Editar</div>
<div style="position:absolute;left:249.61px;top:700.10px;font-size:14px;line-height:14px;height:14px;white-space:nowrap;color:#1553b8;font-weight:normal;letter-spacing:0.250px;transform:scaleX(1.0863);transform-origin:0 0;">Buscar</div>
<div style="position:absolute;left:356.36px;top:700.10px;font-size:14px;line-height:14px;height:14px;white-space:nowrap;color:#1553b8;font-weight:normal;letter-spacing:0.250px;transform:scaleX(1.0402);transform-origin:0 0;">Eliminar</div>
<div style="position:absolute;left:463.51px;top:700.10px;font-size:14px;line-height:14px;height:14px;white-space:nowrap;color:#1553b8;font-weight:normal;letter-spacing:0.250px;transform:scaleX(1.1429);transform-origin:0 0;">Imprimir</div>
<div style="position:absolute;left:616px;top:690.5px;width:97px;height:33.5px;background:#f2f2f2;border-radius:3px"></div>
<div style="position:absolute;left:724px;top:690.5px;width:96px;height:33.5px;background:#f2f2f2;border-radius:3px"></div>
<div style="position:absolute;left:646.50px;top:700.10px;font-size:14px;line-height:14px;height:14px;white-space:nowrap;color:#666;font-weight:normal;letter-spacing:0.250px;transform:scaleX(1.0747);transform-origin:0 0;">Aceptar</div>
<div style="position:absolute;left:752.68px;top:700.10px;font-size:14px;line-height:14px;height:14px;white-space:nowrap;color:#666;font-weight:normal;letter-spacing:0.250px;transform:scaleX(1.0308);transform-origin:0 0;">Cancelar</div>
<svg style="left:0;top:0" width="970" height="732" fill="none" stroke-linecap="round" stroke-linejoin="round"><path d="M25.2 707.8 V698.8 Q25.2 696.6 23 696.6 H11.7 Q9.5 696.6 9.5 698.8 V713.2 Q9.5 715.4 11.7 715.4 H17.5" stroke="#333" stroke-width="2"/><path d="M25.2 711.6 V719.6 M21.2 715.6 H29.2" stroke="#333" stroke-width="2"/><path d="M132.2 701.5 V698 Q132.2 695.8 130 695.8 H119.5 Q117.3 695.8 117.3 698 V713.2 Q117.3 715.4 119.5 715.4 H121.5" stroke="#333" stroke-width="2"/><path d="M127.5 716.8 L136.8 707.5" stroke="#333" stroke-width="2.6"/><path d="M231 716.8 H226.6 Q224.4 716.8 224.4 714.6 V698.3 Q224.4 696.1 226.6 696.1 H236.6 Q238.8 696.1 238.8 698.3 V704.5" stroke="#333" stroke-width="2"/><circle cx="235.4" cy="711.1" r="3.9" stroke="#333" stroke-width="2"/><path d="M238.3 714 L242.8 718.5" stroke="#333" stroke-width="2.2"/><path d="M332.3 700.4 H350.7" stroke="#333" stroke-width="2.4"/><path d="M337.5 699.8 V697.8 Q337.5 696.7 338.6 696.7 H344.4 Q345.5 696.7 345.5 697.8 V699.8" stroke="#333" stroke-width="1.8"/><path d="M334.3 702 V714.8 Q334.3 717 336.5 717 H346.5 Q348.7 717 348.7 714.8 V702" stroke="#333" stroke-width="2"/><path d="M338.3 704.5 V714 M341.5 704.5 V714 M344.7 704.5 V714" stroke="#333" stroke-width="1.5"/><path d="M442.4 700.5 V697.8 Q442.4 696.5 443.7 696.5 H453 Q454.3 696.5 454.3 697.8 V700.5" stroke="#333" stroke-width="1.8"/><path d="M442 712.5 H440.8 Q439 712.5 439 710.7 V703.3 Q439 701.2 441.1 701.2 H455.6 Q457.7 701.2 457.7 703.3 V710.7 Q457.7 712.5 455.9 712.5 H454.7" stroke="#333" stroke-width="2"/><path d="M442.6 708.6 H454.1 V716.4 H442.6 Z" stroke="#333" stroke-width="1.8" fill="#cfcfcf"/><circle cx="454.3" cy="704.4" r="0.8" fill="#333"/><path d="M537.3 706.6 L546.5 699.4 L555.7 706.6 M537.3 713.3 L546.5 706.1 L555.7 713.3" stroke="#333" stroke-width="2.2" stroke-linecap="butt" stroke-linejoin="miter"/><path d="M621 706.5 L626.5 712.2 L638.5 699.5" stroke="#555" stroke-width="2.2" stroke-linecap="butt"/><path d="M729.6 699.3 L745.6 714 M745.6 699.3 L729.6 714" stroke="#555" stroke-width="2.1" stroke-linecap="butt"/></svg>
<svg style="left:0;top:0" width="970" height="732"><g fill="#f6c52a" stroke="#e39b00" stroke-width="0.7" stroke-linejoin="round"><polygon points="101.76,694.01 90.90,682.80 99.24,695.99"/><polygon points="102.08,695.27 102.40,684.00 98.92,694.73"/><polygon points="101.53,696.23 113.40,684.20 99.47,693.77"/><polygon points="100.62,696.60 121.80,693.40 100.38,693.40"/><polygon points="100.15,696.56 122.80,700.00 100.85,693.44"/><polygon points="100.42,693.40 90.00,695.50 100.58,696.60"/><polygon points="99.52,693.73 89.50,703.50 101.48,696.27"/><polygon points="99.01,694.41 94.30,710.50 101.99,695.59"/><circle cx="100.5" cy="695" r="2.2" fill="#ffe97a" stroke="none"/></g><path d="M100.8 695.8 L101.6 717.4 L106.4 712.6 L110.6 721 L113.4 719.6 L109.4 711.4 L115.8 711.2 Z" fill="#fff" stroke="#111" stroke-width="1.1" stroke-linejoin="round" style="filter:drop-shadow(1px 2px 1.5px rgba(0,0,0,.45))"/></svg>
</body></html>
